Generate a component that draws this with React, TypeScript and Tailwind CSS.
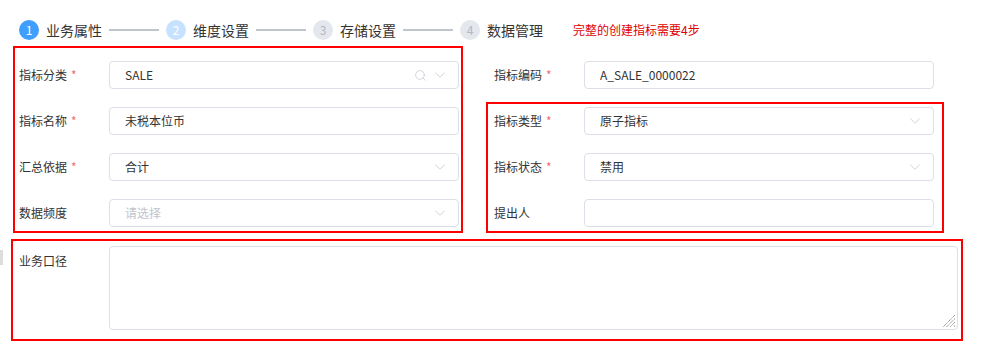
import { Search, ChevronDown } from 'lucide-react';

const font = { fontFamily: '"Noto Sans CJK SC", "Noto Sans", sans-serif' };

const steps = [
  { n: 1, title: '业务属性', circle: 'bg-[#409eff] text-white' },
  { n: 2, title: '维度设置', circle: 'bg-[#c6e2ff] text-white' },
  { n: 3, title: '存储设置', circle: 'bg-[#e4e7ed] text-[#b4b8c0]' },
  { n: 4, title: '数据管理', circle: 'bg-[#e4e7ed] text-[#b4b8c0]' },
];

function Label({ text, required }: { text: string; required?: boolean }) {
  return (
    <div className="w-[90px] shrink-0 text-[12px] text-[#333]">
      {text}
      {required && <span className="ml-[4px] text-[#f56c6c]">*</span>}
    </div>
  );
}

function Field({
  label,
  required,
  value,
  placeholder,
  select,
  search,
}: {
  label: string;
  required?: boolean;
  value?: string;
  placeholder?: string;
  select?: boolean;
  search?: boolean;
}) {
  return (
    <div className="flex items-center">
      <Label text={label} required={required} />
      <div className="flex h-[28px] w-[350px] items-center rounded-[4px] border border-[#dcdfe6] bg-white pl-[15px] pr-[9px]">
        <span className={`flex-1 text-[12px] ${value ? 'text-[#333]' : 'text-[#c0c4cc]'}`}>
          {value || placeholder}
        </span>
        {search && <Search size={13} strokeWidth={1.3} className="mr-[4px] text-[#c0c4cc]" />}
        {select && <ChevronDown size={18} strokeWidth={1} className="text-[#c0c4cc]" />}
      </div>
    </div>
  );
}

export default function App() {
  return (
    <div className="h-[350px] w-[983px] bg-white" style={font}>
      {/* steps */}
      <div className="flex items-center pl-[19px] pt-[20px]">
        {steps.map((s, i) => (
          <div key={s.n} className="flex items-center">
            <div
              className={`flex h-[20px] w-[20px] items-center justify-center rounded-full text-[12px] ${s.circle}`}
            >
              {s.n}
            </div>
            <span className="ml-[7px] text-[14px] leading-[20px] text-[#333]">{s.title}</span>
            {i < steps.length - 1 && <div className="mx-[7px] h-[2px] w-[50px] bg-[#c0c4cc]" />}
          </div>
        ))}
        <span className="ml-[30px] text-[12px] text-[#e00000]">完整的创建指标需要4步</span>
      </div>

      {/* form */}
      <div className="mt-[6px] flex pl-[13px]">
        <div className="flex w-[450px] flex-col gap-[18px] border-2 border-[#ff0000] pb-[4px] pl-[4px] pt-[13px]">
          <Field label="指标分类" required value="SALE" select search />
          <Field label="指标名称" required value="未税本位币" />
          <Field label="汇总依据" required value="合计" select />
          <Field label="数据频度" placeholder="请选择" select />
        </div>

        <div className="ml-[23px] flex flex-col">
          <div className="pl-[8px] pt-[15px]">
            <Field label="指标编码" required value="A_SALE_0000022" />
          </div>
          <div className="mt-[13px] flex w-[458px] flex-col gap-[18px] border-2 border-[#ff0000] pb-[4px] pl-[6px] pt-[3px]">
            <Field label="指标类型" required value="原子指标" select />
            <Field label="指标状态" required value="禁用" select />
            <Field label="提出人" />
          </div>
        </div>
      </div>

      <div className="mt-[6px] flex">
        <div className="mt-[11px] h-[15px] w-[3px] bg-[#dddddd]" />
        <div className="ml-[8px] flex w-[952px] border-2 border-[#ff0000] pb-[9px] pl-[6px] pr-[3px] pt-[5px]">
          <div className="w-[90px] shrink-0 pt-[6px] text-[12px] text-[#333]">业务口径</div>
          <div className="relative">
            <textarea
              className="block h-[84px] w-[849px] resize-none rounded-[4px] border border-[#dcdfe6] bg-white px-[15px] py-[5px] text-[12px] outline-none"
              style={font}
            />
            <svg
              className="absolute bottom-[2px] right-[2px]"
              width="14"
              height="14"
              viewBox="0 0 14 14"
            >
              <g stroke="#8a8a8a" strokeWidth="1" strokeDasharray="1.2 0.6">
                <line x1="13" y1="1" x2="1" y2="13" />
                <line x1="13" y1="4.5" x2="4.5" y2="13" />
                <line x1="13" y1="8" x2="8" y2="13" />
                <line x1="13" y1="11.5" x2="11.5" y2="13" />
              </g>
            </svg>
          </div>
        </div>
      </div>
    </div>
  );
}
